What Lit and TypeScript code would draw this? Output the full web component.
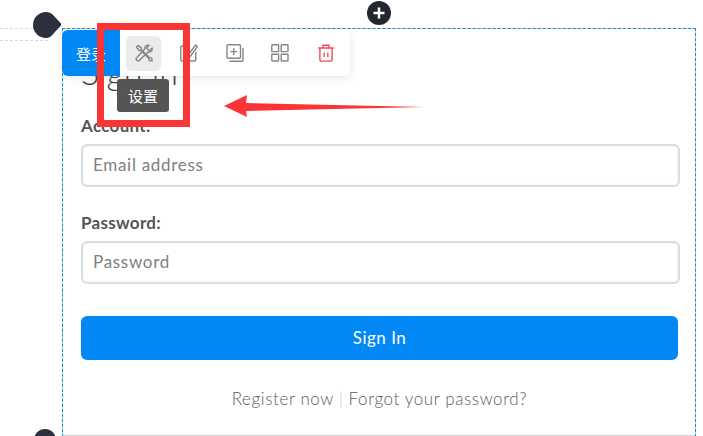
import { LitElement, html, css, svg } from "lit";
import { customElement } from "lit/decorators.js";

const tools = [
  svg`<path d="M1.500 3.200 3.200 1.500 6.400 4.200V6L14 13.300 16.800 14.200 17 16.800 14.500 16.500 13.500 14 5.900 6.500H4.300Z"/><path d="M17 4.200 14.300 6.800 11.500 4 14.100 1.300C11.600.5 9.300 2.500 9.800 5L1.800 13.500A1.800 1.800 0 0 0 4.500 16.200L12.800 8.200C15.400 8.700 17.700 6.700 17 4.200Z"/>`,
  svg`<path d="M10 2H2A1.300 1.300 0 0 0 .800 3.300V15.700A1.300 1.300 0 0 0 2 17H14.500A1.300 1.300 0 0 0 15.800 15.700V8"/><path d="M7.500 12 15.500 1 17.500 2.500 9.500 13.500Z"/>`,
  svg`<rect x="1" y=".800" width="13.500" height="13.500" rx="1.200"/><path d="M17 4V16A1.300 1.300 0 0 1 15.700 17.300H3.500"/><path d="M7.700 4.200V11M4.300 7.600H11.100"/>`,
  svg`<rect x=".800" y=".800" width="6.800" height="6.800" rx=".6"/><rect x="10.200" y=".800" width="6.800" height="6.800" rx=".6"/><rect x=".800" y="10.200" width="6.800" height="6.800" rx=".6"/><rect x="10.200" y="10.200" width="6.800" height="6.800" rx=".6"/>`,
  svg`<path d="M1.200 4H16.800M6 4V1.200H12V4M2.900 4V15.800A1.300 1.300 0 0 0 4.200 17.100H13.800A1.300 1.300 0 0 0 15.100 15.800V4M7.200 8.500V13M10.800 8.500V13"/>`,
];

@customElement("app-root")
export class AppRoot extends LitElement {
  static styles = css`
    :host {
      display: block;
      position: relative;
      width: 703px;
      height: 436px;
      overflow: hidden;
      background: #fff;
      font-family: Lato, "Noto Sans CJK SC", sans-serif;
      color: #555;
    }

    .canvas {
      box-sizing: border-box;
      height: 100%;
      padding: 28px 7px 0 62px;
    }

    .block {
      box-sizing: border-box;
      position: relative;
      height: 408px;
      padding: 23px 15px 0 18px;
      border: 1px solid #d4d4d4;
    }

    .block::before {
      content: "";
      position: absolute;
      inset: -1px -1px -12px -1px;
      border: 1px dashed #0a8fd8;
    }

    h1 {
      margin: 0;
      font-size: 34px;
      line-height: 40px;
      font-weight: 300;
      color: #444;
    }

    label {
      display: block;
      margin-top: 26px;
      font-size: 17px;
      line-height: 20px;
      font-weight: 700;
      letter-spacing: 0.3px;
      color: #555;
    }

    .first {
      margin-top: 24px;
    }

    .field {
      box-sizing: border-box;
      display: flex;
      align-items: center;
      width: 599px;
      height: 43px;
      margin-top: 8px;
      padding: 0 10px 2px;
      border: 2px solid #dcdcdc;
      border-radius: 6px;
      box-shadow: inset 0 0 2px #e6e6e6;
      font-size: 17px;
      letter-spacing: 0.7px;
      color: #808080;
    }

    .submit {
      box-sizing: border-box;
      display: flex;
      align-items: center;
      justify-content: center;
      width: 597px;
      height: 44px;
      margin-top: 32px;
      padding-bottom: 2px;
      border-radius: 6px;
      background: #0288f5;
      color: #fff;
      font-size: 17px;
      letter-spacing: 0.5px;
    }

    .links {
      display: flex;
      justify-content: center;
      gap: 5px;
      width: 597px;
      margin-top: 28px;
      font-size: 17px;
      line-height: 22px;
      letter-spacing: 0.6px;
      color: #5c5c5c;
      font-weight: 300;
    }

    .sep {
      color: #ccc;
    }

    .guide {
      position: absolute;
      left: 0;
      width: 48px;
      border-top: 1px dashed #d8d8d8;
    }

    .handle {
      position: absolute;
      left: 33px;
      top: 12px;
      width: 28px;
      height: 26px;
    }

    .handle-bottom {
      position: absolute;
      left: 34px;
      top: 429px;
      width: 22px;
      height: 22px;
      border-radius: 50%;
      background: #2b2f3e;
    }

    .plus {
      position: absolute;
      left: 367px;
      top: 1px;
      width: 24px;
      height: 24px;
    }

    .toolbar {
      position: absolute;
      left: 62px;
      top: 30px;
      display: flex;
      align-items: center;
      width: 288px;
      height: 46px;
      border-radius: 6px;
      background: #fff;
      box-shadow: 0 2px 8px rgba(0, 0, 0, 0.1);
    }

    .tag {
      display: flex;
      align-items: center;
      justify-content: center;
      width: 58px;
      height: 46px;
      border-radius: 6px 0 0 6px;
      background: #0288f5;
      color: #fff;
      font-size: 15px;
    }

    .icons {
      display: flex;
      gap: 10.6px;
      margin-left: 6px;
    }

    .icon {
      display: flex;
      align-items: center;
      justify-content: center;
      width: 35px;
      height: 35px;
      border-radius: 5px;
    }

    .icon.active {
      background: #ebebeb;
    }

    .icon svg {
      width: 18px;
      height: 18px;
      fill: none;
      stroke: #858585;
      stroke-width: 1.4;
    }

    .icon.danger svg {
      stroke: #ee4c55;
    }

    .tooltip {
      position: absolute;
      left: 117px;
      top: 79px;
      display: flex;
      align-items: center;
      justify-content: center;
      width: 52px;
      height: 33px;
      border-radius: 3px;
      background: #555;
      color: #fff;
      font-size: 15px;
    }

    .mark {
      box-sizing: border-box;
      position: absolute;
      left: 97px;
      top: 23px;
      width: 93px;
      height: 104px;
      border: 7px solid #fb3535;
    }

    .arrow {
      position: absolute;
      left: 220px;
      top: 92px;
      width: 210px;
      height: 28px;
    }
  `;

  render() {
    return html`
      <div class="canvas">
        <div class="block">
          <h1>Sign in</h1>
          <label class="first">Account:</label>
          <div class="field">Email address</div>
          <label>Password:</label>
          <div class="field">Password</div>
          <div class="submit">Sign In</div>
          <div class="links">
            <span>Register now</span><span class="sep">|</span
            ><span>Forgot your password?</span>
          </div>
        </div>
      </div>

      <div class="guide" style="top: 28px"></div>
      <div class="guide" style="top: 40px"></div>
      <svg class="handle" viewBox="0 0 28 26">
        <path d="M13 0C16 0 19 1.500 21 4L29 12.500 21 21C19 24 16 26 13 26A13 13 0 0 1 13 0Z" fill="#2b2f3e" />
      </svg>
      <div class="handle-bottom"></div>
      <svg class="plus" viewBox="0 0 24 24">
        <circle cx="12" cy="12" r="12" fill="#24272f" />
        <path d="M12 6.500V17.500M6.500 12H17.500" stroke="#fff" stroke-width="2.500" />
      </svg>

      <div class="toolbar">
        <div class="tag">登录</div>
        <div class="icons">
          ${tools.map(
            (t, i) => html`<div class="icon ${i === 0 ? "active" : ""} ${i === 4 ? "danger" : ""}">
              <svg viewBox="0 0 18 18">${t}</svg>
            </div>`,
          )}
        </div>
      </div>
      <div class="tooltip">设置</div>
      <div class="mark"></div>
      <svg class="arrow" viewBox="0 0 210 28">
        <path d="M4 14 27 3 26 11 205 15 26 19 27 25Z" fill="#fb3535" />
      </svg>
    `;
  }
}
